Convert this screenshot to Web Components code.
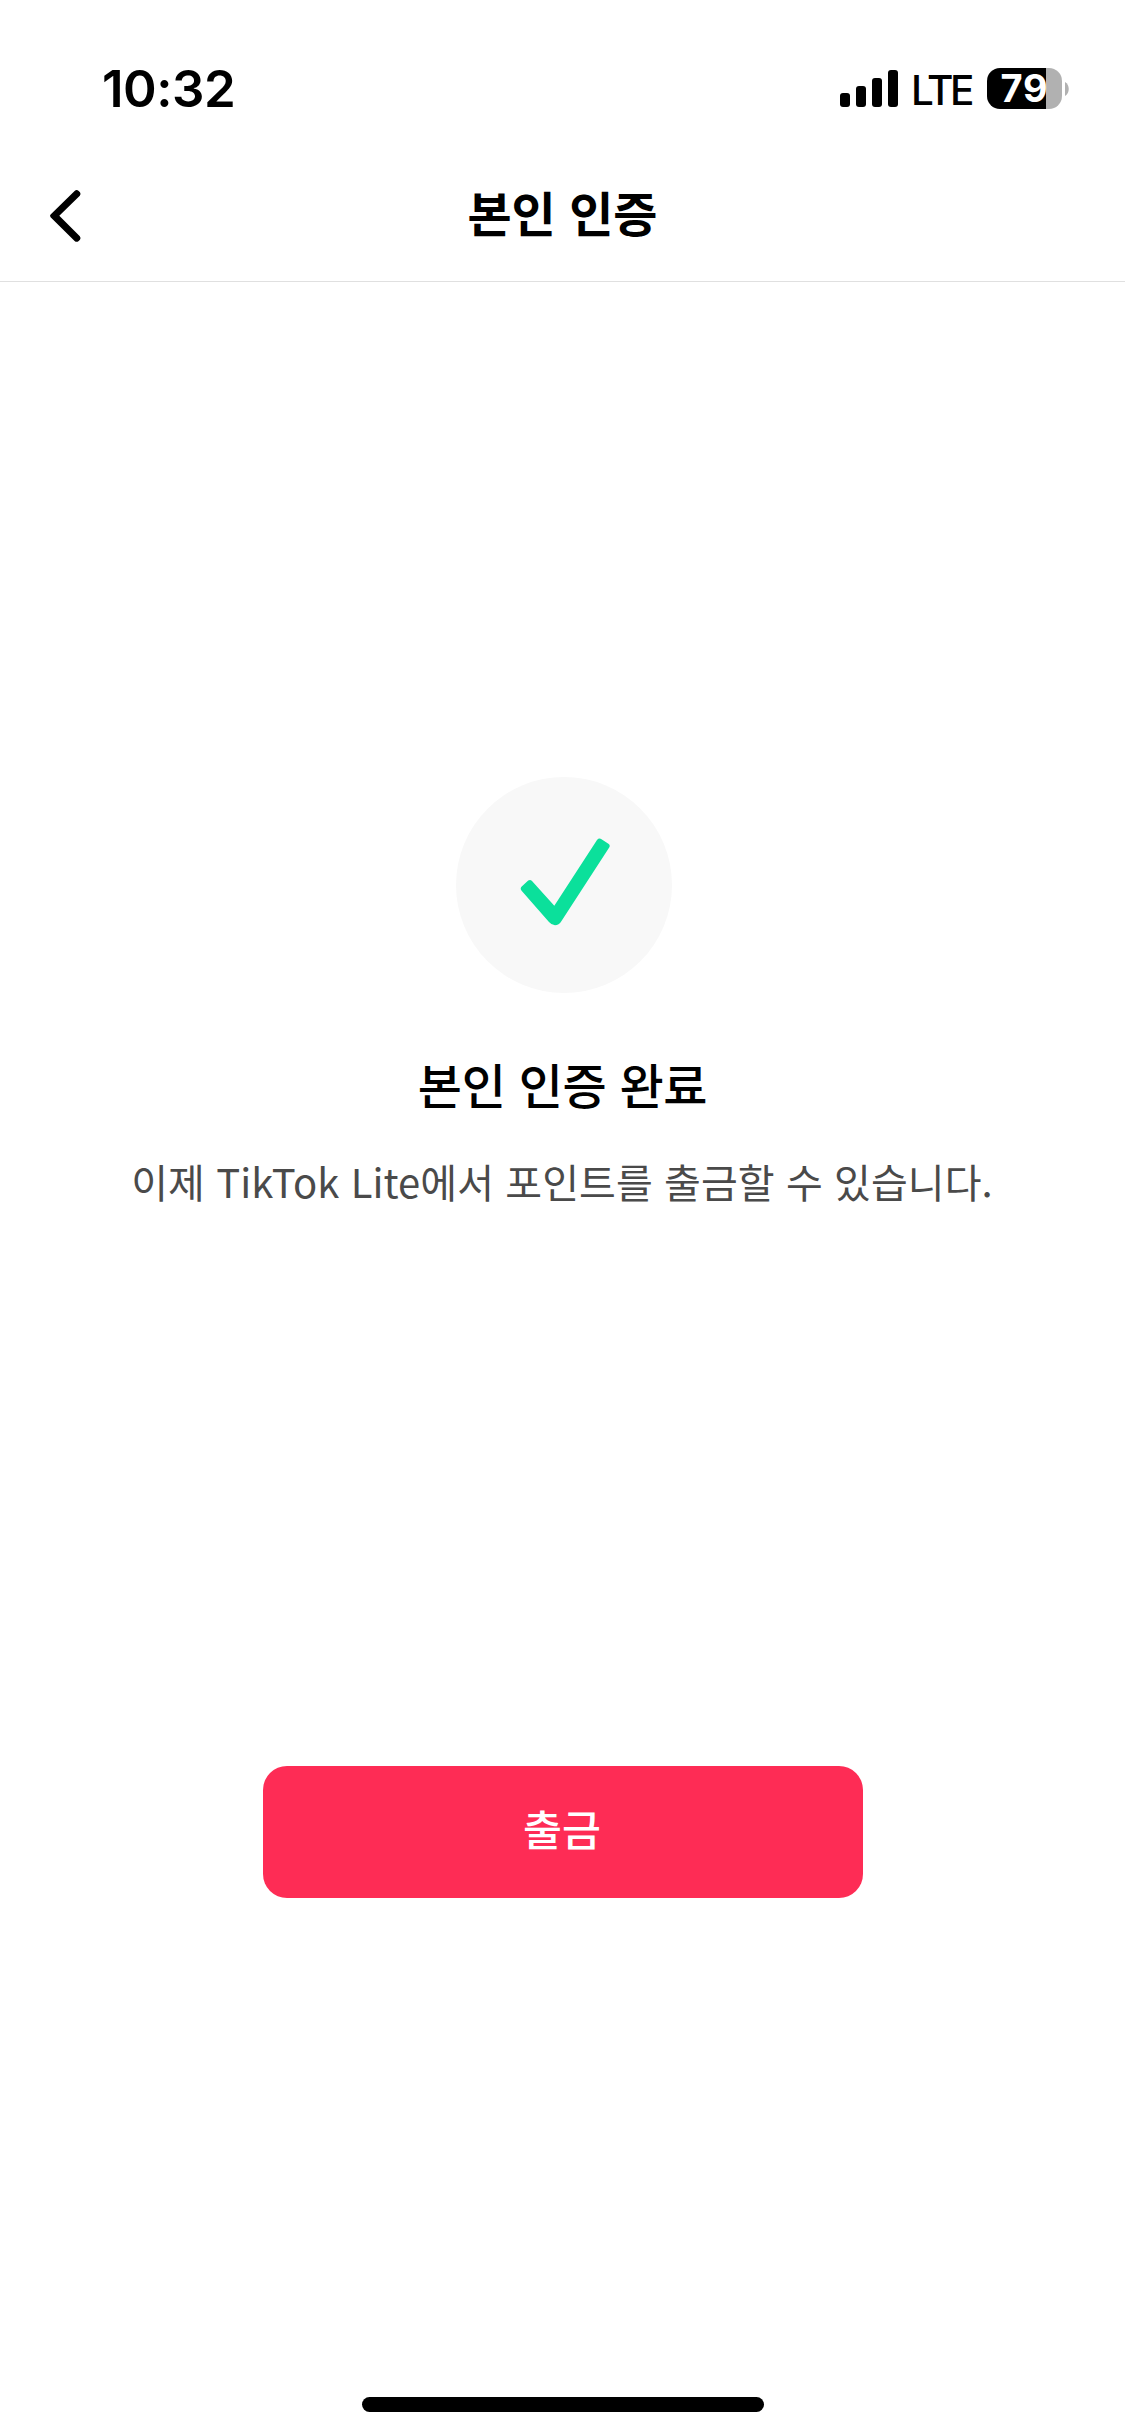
<!DOCTYPE html>
<html lang="ko">
<head>
<meta charset="utf-8">
<title>본인 인증</title>
<style>
html,body{margin:0;background:#fff}
body{width:1125px;height:2436px;overflow:hidden;font-family:"Noto Sans CJK KR",sans-serif;color:#000}
</style>
</head>
<body>
<verify-page></verify-page>
<script>
const define = (name, html) => customElements.define(name, class extends HTMLElement {
  constructor() {
    super();
    const t = document.createElement('template');
    t.innerHTML = html;
    this.attachShadow({mode: 'open'}).append(t.content.cloneNode(true));
  }
});

define('signal-bars', `<style>
:host{display:flex;align-items:flex-end;gap:6px;height:37px}
i{width:10px;border-radius:3px;background:#000}
</style><i style="height:14px"></i><i style="height:21px"></i><i style="height:29px"></i><i style="height:37px"></i>`);

define('battery-level', `<style>
:host{display:flex;align-items:center;gap:3px}
.b{width:75px;height:41px;border-radius:13px;background:linear-gradient(90deg,#000 59px,#b1b1b1 59px);display:flex;align-items:center;justify-content:center;color:#fff;font:650 38px/41px Inter,sans-serif;letter-spacing:.7px}
svg{display:block}
</style><div class="b"><span><slot></slot></span></div><svg width="4" height="14" viewBox="0 0 4 14"><path d="M0 0C5 3 5 11 0 14Z" fill="#b1b1b1"/></svg>`);

define('status-bar', `<style>
:host{display:flex;justify-content:space-between;height:177px;box-sizing:border-box;padding:68px 56px 0 102px}
.time{font:600 51px/41px Inter,sans-serif;letter-spacing:-.5px}
.right{display:flex;height:41px;align-items:center}
.lte{font:500 40.5px/41px Inter,sans-serif;margin:4px 0 0 13px;width:76px;letter-spacing:-3.2px}
</style><div class="time">10:32</div><div class="right"><signal-bars></signal-bars><span class="lte">LTE</span><battery-level>79</battery-level></div>`);

define('nav-bar', `<style>
:host{display:grid;grid-template-columns:120px 1fr 120px;height:105px;box-sizing:border-box;border-bottom:1px solid #e0e0e0}
svg{display:block;margin:8px 0 0 44px}
h1{margin:-2px 0 0;text-align:center;font-weight:700;font-size:48px;line-height:72px;letter-spacing:0}
</style><svg width="44" height="60" viewBox="44 185 44 60"><path d="M74.6 191Q76.6 189.2 78.4 190.8L80 192.3Q81.2 194 79.8 195.7L59.3 215.7L79.8 236.3Q81.2 238 80 239.7L78.4 241.2Q76.6 242.6 74.6 241L50.6 217.2Q49.4 215.7 50.6 214.4Z"/></svg><h1><slot></slot></h1>`);

define('success-mark', `<style>
:host{display:flex;width:216px;height:216px;margin-left:3px;border-radius:50%;background:#f8f8f8}
</style><svg width="216" height="216" viewBox="456 777 216 216"><path d="M522 886.3L528.2 880.6Q530.2 879 532 881L554.3 905.7L597 840Q599 837.6 601.5 839.2L608.4 843.7Q610.6 845.3 609.2 847.6L561.5 921Q558.8 925.3 555 925.3Q551.8 925.3 549 922L521.6 890.8Q519.6 888.4 522 886.3Z" fill="#0be09b"/></svg>`);

define('result-message', `<style>
:host{display:flex;flex-direction:column;align-items:center;padding-top:495px}
h2{margin:54px 0 0;font-weight:500;font-size:48px;line-height:72px;white-space:nowrap;letter-spacing:-.3px}
p{margin:33px 0 0;font-size:40px;line-height:58px;color:#4a4a4a;white-space:nowrap;letter-spacing:.07px;margin-right:1px}
</style><success-mark></success-mark><h2><slot name="title"></slot></h2><p><slot></slot></p>`);

define('primary-button', `<style>
:host{display:block}
button{display:flex;align-items:center;justify-content:center;width:600px;height:132px;border:0;border-radius:24px;background:#fe2c55;color:#fff;font:500 42.3px/62px "Noto Sans CJK KR",sans-serif;padding:0 2px 8px 0}
</style><button><slot></slot></button>`);

define('home-indicator', `<style>
:host{display:block;width:402px;height:15px;border-radius:8px;background:#000}
</style>`);

define('verify-page', `<style>
:host{display:flex;flex-direction:column;height:2436px;background:#fff}
result-message{height:1484px;box-sizing:border-box}
primary-button,home-indicator{align-self:center}
primary-button{margin-left:1px}
home-indicator{margin-top:auto;margin-bottom:24px;margin-left:1px}
</style><status-bar></status-bar><nav-bar>본인 인증</nav-bar>
<result-message><span slot="title">본인 인증 완료</span>이제 TikTok Lite에서 포인트를 출금할 수 있습니다.</result-message>
<primary-button>출금</primary-button><home-indicator></home-indicator>`);
</script>
</body>
</html>
